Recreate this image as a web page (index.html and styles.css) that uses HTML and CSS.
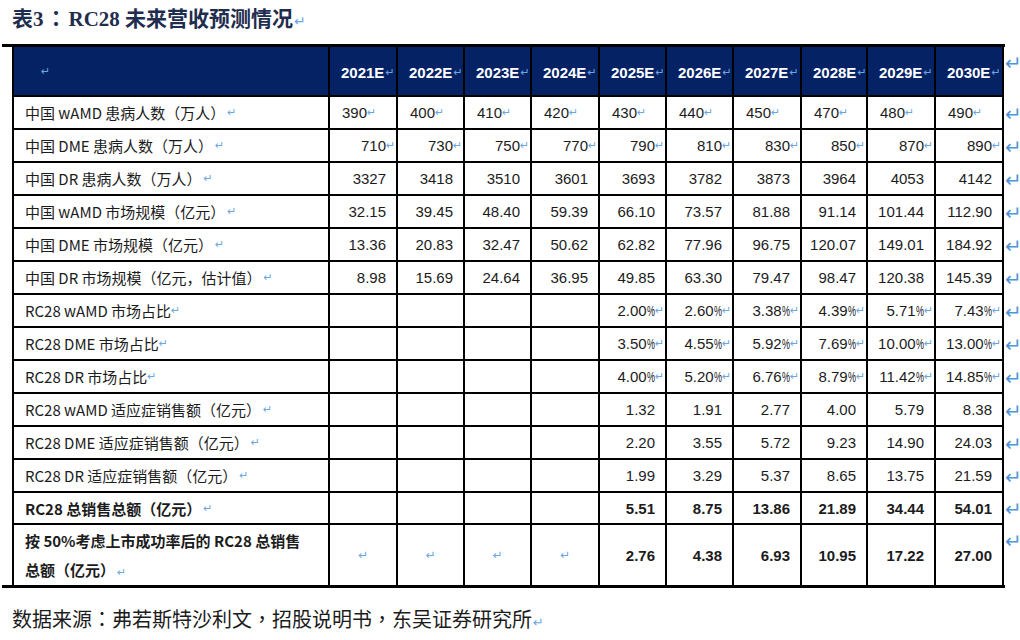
FILE: index.html
```html
<!DOCTYPE html>
<html lang="zh-CN">
<head>
<meta charset="utf-8">
<title>表3：RC28 未来营收预测情况</title>
<link rel="stylesheet" href="styles.css">
</head>
<body>
<h1 class="title">表3<span class="pu" lang="zh-TW">：</span>RC28 未来营收预测情况<span class="m tm">↵</span></h1>
<div class="frame">
  <div class="grid">
    <div class="c h first hfirst"><span class="m">↵</span></div>
    <div class="c h">2021E<span class="m">↵</span></div>
    <div class="c h">2022E<span class="m">↵</span></div>
    <div class="c h">2023E<span class="m">↵</span></div>
    <div class="c h">2024E<span class="m">↵</span></div>
    <div class="c h">2025E<span class="m">↵</span></div>
    <div class="c h">2026E<span class="m">↵</span></div>
    <div class="c h">2027E<span class="m">↵</span></div>
    <div class="c h">2028E<span class="m">↵</span></div>
    <div class="c h">2029E<span class="m">↵</span></div>
    <div class="c h">2030E<span class="m">↵</span></div>
    <div class="rm top"><span class="rmk">↵</span></div>

    <div class="c first lbl">中国 wAMD 患病人数（万人）<span class="m gap">↵</span></div>
    <div class="c l">390<span class="m">↵</span></div>
    <div class="c l">400<span class="m">↵</span></div>
    <div class="c l">410<span class="m">↵</span></div>
    <div class="c l">420<span class="m">↵</span></div>
    <div class="c l">430<span class="m">↵</span></div>
    <div class="c l">440<span class="m">↵</span></div>
    <div class="c l">450<span class="m">↵</span></div>
    <div class="c l">470<span class="m">↵</span></div>
    <div class="c l">480<span class="m">↵</span></div>
    <div class="c l">490<span class="m">↵</span></div>
    <div class="rm"><span class="rmk">↵</span></div>

    <div class="c first lbl">中国 DME 患病人数（万人）<span class="m gap">↵</span></div>
    <div class="c n">710<span class="m z">↵</span></div>
    <div class="c n">730<span class="m z">↵</span></div>
    <div class="c n">750<span class="m z">↵</span></div>
    <div class="c n">770<span class="m z">↵</span></div>
    <div class="c n">790<span class="m z">↵</span></div>
    <div class="c n">810<span class="m z">↵</span></div>
    <div class="c n">830<span class="m z">↵</span></div>
    <div class="c n">850<span class="m z">↵</span></div>
    <div class="c n">870<span class="m z">↵</span></div>
    <div class="c n">890<span class="m z">↵</span></div>
    <div class="rm"><span class="rmk">↵</span></div>

    <div class="c first lbl">中国 DR 患病人数（万人）<span class="m gap">↵</span></div>
    <div class="c n">3327</div>
    <div class="c n">3418</div>
    <div class="c n">3510</div>
    <div class="c n">3601</div>
    <div class="c n">3693</div>
    <div class="c n">3782</div>
    <div class="c n">3873</div>
    <div class="c n">3964</div>
    <div class="c n">4053</div>
    <div class="c n">4142</div>
    <div class="rm"><span class="rmk">↵</span></div>

    <div class="c first lbl">中国 wAMD 市场规模（亿元）<span class="m gap">↵</span></div>
    <div class="c n">32.15</div>
    <div class="c n">39.45</div>
    <div class="c n">48.40</div>
    <div class="c n">59.39</div>
    <div class="c n">66.10</div>
    <div class="c n">73.57</div>
    <div class="c n">81.88</div>
    <div class="c n">91.14</div>
    <div class="c n">101.44</div>
    <div class="c n">112.90</div>
    <div class="rm"><span class="rmk">↵</span></div>

    <div class="c first lbl">中国 DME 市场规模（亿元）<span class="m gap">↵</span></div>
    <div class="c n">13.36</div>
    <div class="c n">20.83</div>
    <div class="c n">32.47</div>
    <div class="c n">50.62</div>
    <div class="c n">62.82</div>
    <div class="c n">77.96</div>
    <div class="c n">96.75</div>
    <div class="c n">120.07</div>
    <div class="c n">149.01</div>
    <div class="c n">184.92</div>
    <div class="rm"><span class="rmk">↵</span></div>

    <div class="c first lbl">中国 DR 市场规模（亿元，估计值）<span class="m gap">↵</span></div>
    <div class="c n">8.98</div>
    <div class="c n">15.69</div>
    <div class="c n">24.64</div>
    <div class="c n">36.95</div>
    <div class="c n">49.85</div>
    <div class="c n">63.30</div>
    <div class="c n">79.47</div>
    <div class="c n">98.47</div>
    <div class="c n">120.38</div>
    <div class="c n">145.39</div>
    <div class="rm"><span class="rmk">↵</span></div>

    <div class="c first lbl">RC28 wAMD 市场占比<span class="m">↵</span></div>
    <div class="c n"></div>
    <div class="c n"></div>
    <div class="c n"></div>
    <div class="c n"></div>
    <div class="c n">2.00<span class="pct">%</span><span class="m z">↵</span></div>
    <div class="c n">2.60<span class="pct">%</span><span class="m z">↵</span></div>
    <div class="c n">3.38<span class="pct">%</span><span class="m z">↵</span></div>
    <div class="c n">4.39<span class="pct">%</span><span class="m z">↵</span></div>
    <div class="c n">5.71<span class="pct">%</span><span class="m z">↵</span></div>
    <div class="c n">7.43<span class="pct">%</span><span class="m z">↵</span></div>
    <div class="rm"><span class="rmk">↵</span></div>

    <div class="c first lbl">RC28 DME 市场占比<span class="m">↵</span></div>
    <div class="c n"></div>
    <div class="c n"></div>
    <div class="c n"></div>
    <div class="c n"></div>
    <div class="c n">3.50<span class="pct">%</span><span class="m z">↵</span></div>
    <div class="c n">4.55<span class="pct">%</span><span class="m z">↵</span></div>
    <div class="c n">5.92<span class="pct">%</span><span class="m z">↵</span></div>
    <div class="c n">7.69<span class="pct">%</span><span class="m z">↵</span></div>
    <div class="c n">10.00<span class="pct">%</span><span class="m z">↵</span></div>
    <div class="c n">13.00<span class="pct">%</span><span class="m z">↵</span></div>
    <div class="rm"><span class="rmk">↵</span></div>

    <div class="c first lbl">RC28 DR 市场占比<span class="m">↵</span></div>
    <div class="c n"></div>
    <div class="c n"></div>
    <div class="c n"></div>
    <div class="c n"></div>
    <div class="c n">4.00<span class="pct">%</span><span class="m z">↵</span></div>
    <div class="c n">5.20<span class="pct">%</span><span class="m z">↵</span></div>
    <div class="c n">6.76<span class="pct">%</span><span class="m z">↵</span></div>
    <div class="c n">8.79<span class="pct">%</span><span class="m z">↵</span></div>
    <div class="c n">11.42<span class="pct">%</span><span class="m z">↵</span></div>
    <div class="c n">14.85<span class="pct">%</span><span class="m z">↵</span></div>
    <div class="rm"><span class="rmk">↵</span></div>

    <div class="c first lbl">RC28 wAMD 适应症销售额（亿元）<span class="m gap">↵</span></div>
    <div class="c n"></div>
    <div class="c n"></div>
    <div class="c n"></div>
    <div class="c n"></div>
    <div class="c n">1.32</div>
    <div class="c n">1.91</div>
    <div class="c n">2.77</div>
    <div class="c n">4.00</div>
    <div class="c n">5.79</div>
    <div class="c n">8.38</div>
    <div class="rm"><span class="rmk">↵</span></div>

    <div class="c first lbl">RC28 DME 适应症销售额（亿元）<span class="m gap">↵</span></div>
    <div class="c n"></div>
    <div class="c n"></div>
    <div class="c n"></div>
    <div class="c n"></div>
    <div class="c n">2.20</div>
    <div class="c n">3.55</div>
    <div class="c n">5.72</div>
    <div class="c n">9.23</div>
    <div class="c n">14.90</div>
    <div class="c n">24.03</div>
    <div class="rm"><span class="rmk">↵</span></div>

    <div class="c first lbl">RC28 DR 适应症销售额（亿元）<span class="m gap">↵</span></div>
    <div class="c n"></div>
    <div class="c n"></div>
    <div class="c n"></div>
    <div class="c n"></div>
    <div class="c n">1.99</div>
    <div class="c n">3.29</div>
    <div class="c n">5.37</div>
    <div class="c n">8.65</div>
    <div class="c n">13.75</div>
    <div class="c n">21.59</div>
    <div class="rm"><span class="rmk">↵</span></div>

    <div class="c first lbl b">RC28 总销售总额（亿元）<span class="m gap">↵</span></div>
    <div class="c n b"></div>
    <div class="c n b"></div>
    <div class="c n b"></div>
    <div class="c n b"></div>
    <div class="c n b">5.51</div>
    <div class="c n b">8.75</div>
    <div class="c n b">13.86</div>
    <div class="c n b">21.89</div>
    <div class="c n b">34.44</div>
    <div class="c n b">54.01</div>
    <div class="rm"><span class="rmk">↵</span></div>

    <div class="c first lbl b last two">按 50%考虑上市成功率后的 RC28 总销售<br>总额（亿元）<span class="m gap">↵</span></div>
    <div class="c ctr last"><span class="m">↵</span></div>
    <div class="c ctr last"><span class="m">↵</span></div>
    <div class="c ctr last"><span class="m">↵</span></div>
    <div class="c ctr last"><span class="m">↵</span></div>
    <div class="c n b last">2.76</div>
    <div class="c n b last">4.38</div>
    <div class="c n b last">6.93</div>
    <div class="c n b last">10.95</div>
    <div class="c n b last">17.22</div>
    <div class="c n b last">27.00</div>
    <div class="rm top"><span class="rmk">↵</span></div>
  </div>
</div>
<p class="source">数据来源<span class="pu" lang="zh-TW">：</span>弗若斯特沙利文<span class="pu" lang="zh-TW">，</span>招股说明书<span class="pu" lang="zh-TW">，</span>东吴证券研究所<span class="m sm">↵</span></p>
</body>
</html>
```

FILE: styles.css
```css
html, body {
  margin: 0;
  padding: 0;
  background: #ffffff;
}

html {
  overflow: hidden;
}

body {
  font-family: "Noto Sans CJK SC", sans-serif;
  color: #1c1c1c;
}

.title {
  margin: 2px 0 0 0;
  padding-left: 12px;
  height: 30px;
  line-height: 30px;
  font-family: "Liberation Serif", "Noto Sans CJK SC", serif;
  font-weight: 700;
  font-size: 21px;
  color: #1f2d4e;
  white-space: nowrap;
}

.pu {
  font-family: "Noto Sans CJK TC", "Noto Sans CJK SC", sans-serif;
}

.title .pu {
  margin-left: 2px;
  margin-right: 2px;
}

.m {
  font-family: "DejaVu Sans", sans-serif;
  font-weight: 400;
  color: #6aa6e0;
  font-size: 11px;
  line-height: 1;
}

.tm {
  font-size: 14px;
  margin-left: 1px;
}

.frame {
  margin-top: 12px;
  margin-left: 2px;
  width: 1003px;
  padding-left: 10px;
  box-sizing: border-box;
  border-top: 3px solid #000;
  border-bottom: 3px solid #000;
}

.grid {
  display: grid;
  width: 1008px;
  grid-template-columns: 318px 68px 67px 67px 68px 67px 67px 68px 66px 68px 68px 16px;
  grid-template-rows: 50px repeat(12, 33px) 32px 60px;
}

.c {
  box-sizing: border-box;
  border-right: 2px solid #000;
  border-bottom: 2px solid #000;
  display: flex;
  align-items: center;
  overflow: hidden;
  white-space: nowrap;
  padding: 0 10px 0 11px;
  font-family: "Liberation Sans", "Noto Sans CJK SC", sans-serif;
  font-size: 15px;
  color: #1c1c1c;
}

.c.last {
  border-bottom: none;
}

.first {
  border-left: 2px solid #000;
}

.h {
  background: #042264;
  color: #ffffff;
  font-weight: 700;
  font-size: 15px;
  padding-top: 3px;
  padding-left: 11px;
}

.h .m {
  font-size: 11px;
  margin-left: 1px;
}

.hfirst {
  padding-left: 26px;
  padding-top: 0;
}

.lbl {
  font-family: "Noto Sans CJK SC", sans-serif;
  font-size: 15px;
  padding-left: 11px;
}

.lbl .m {
  font-size: 11px;
}

.lbl .gap {
  margin-left: 2px;
}

.two {
  white-space: normal;
  display: block;
  line-height: 29px;
  padding-top: 1px;
}

.l {
  justify-content: flex-start;
  padding-left: 12px;
}

.n {
  justify-content: flex-end;
}

.ctr {
  justify-content: center;
  padding: 0;
}

.ctr .m {
  font-size: 12px;
}

.b {
  font-weight: 700;
}

.z {
  display: inline-block;
  width: 0;
  overflow: visible;
  white-space: nowrap;
  font-size: 11px;
}

.pct {
  display: inline-block;
  transform: scaleX(0.6);
  transform-origin: left center;
  margin-right: -5px;
}

.rm {
  display: flex;
  align-items: center;
  padding-left: 1px;
  white-space: nowrap;
}

.rmk {
  font-family: "DejaVu Sans", sans-serif;
  font-size: 20px;
  font-weight: 400;
  line-height: 1;
  color: #4f95d8;
}

.rm.top {
  align-items: flex-start;
  padding-top: 6px;
}

.source {
  margin: 16px 0 0 0;
  padding-left: 12px;
  font-family: "Noto Sans CJK SC", sans-serif;
  font-size: 20px;
  line-height: 30px;
  color: #1c1c1c;
  white-space: nowrap;
}

.sm {
  font-size: 13px;
  margin-left: 1px;
}
```
